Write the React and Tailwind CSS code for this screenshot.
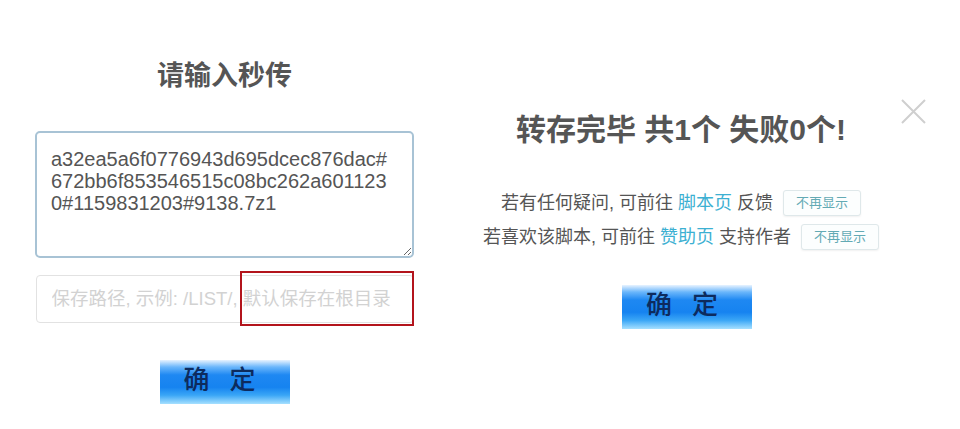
import React from 'react';

const font = "font-['Liberation_Sans','Noto_Sans_CJK_SC',sans-serif]";

const ConfirmButton = () => (
  <button className="flex h-[44px] w-[130px] items-center justify-center gap-[20px] bg-[linear-gradient(to_bottom,#e8f3ff_0%,#6ab6fb_16%,#1e88f2_34%,#1683f0_62%,#3aa6f6_80%,#a6e0ff_100%)] pb-[5px] pr-[10px] text-[26px] font-medium leading-none text-[#0d2b5e]">
    <span>确</span>
    <span>定</span>
  </button>
);

const HideTag = () => (
  <span className="ml-[10px] inline-flex h-[26px] w-[78px] items-center justify-center rounded-[3px] border border-[#dfe8ea] bg-[#fcfefe] text-[13px] text-[#63aab4] shadow-[0_1px_2px_rgba(0,0,0,0.06)]">
    不再显示
  </span>
);

export default function App() {
  const hash = 'a32ea5a6f0776943d695dcec876dac#\n672bb6f853546515c08bc262a601123\n0#1159831203#9138.7z1';

  return (
    <div className={`relative flex h-[429px] w-[960px] bg-white ${font}`}>
      {/* left: input dialog */}
      <div className="flex w-[449px] flex-col items-center pt-[58px]">
        <h2 className="text-[27px] font-bold leading-[36px] text-[#555]">请输入秒传</h2>
        <textarea
          readOnly
          value={hash}
          className={`mt-[37px] h-[127px] w-[379px] rounded-[5px] border-2 border-[#a8c3d5] bg-white px-[14px] pt-[15px] text-[20px] leading-[22px] text-[#555] outline-none ${font}`}
        />
        <div className="relative mt-[17px] h-[48px] w-[378px]">
          <input
            readOnly
            placeholder="保存路径, 示例: /LIST/, 默认保存在根目录"
            className={`h-full w-full rounded-[4px] border border-[#e2e2e2] bg-white px-[15px] text-[18.5px] text-[#555] outline-none placeholder:text-[#d2d2d2] ${font}`}
          />
          <div className="absolute left-[204px] top-[-4px] h-[55px] w-[174px] border-2 border-[#b3141c]" />
        </div>
        <div className="mt-[37px]">
          <ConfirmButton />
        </div>
      </div>

      {/* right: result dialog */}
      <div className="flex w-[464px] flex-col items-center pt-[110px]">
        <h2 className="text-[30px] font-bold leading-[40px] text-[#555]">转存完毕 共1个 失败0个!</h2>
        <div className="mt-[40px] flex items-center text-[18px] leading-[26px] text-[#555]">
          <span>
            若有任何疑问, 可前往 <span className="text-[#3cb0d2]">脚本页</span> 反馈
          </span>
          <HideTag />
        </div>
        <div className="mt-[8px] flex items-center text-[18px] leading-[26px] text-[#555]">
          <span>
            若喜欢该脚本, 可前往 <span className="text-[#3cb0d2]">赞助页</span> 支持作者
          </span>
          <HideTag />
        </div>
        <div className="ml-[12px] mt-[35px]">
          <ConfirmButton />
        </div>
      </div>

      <button className="absolute left-[901px] top-[99px] text-[#cfcfcf]">
        <svg width="25" height="25" viewBox="0 0 25 25" fill="none" stroke="currentColor" strokeWidth="2">
          <path d="M1 1 L24 24 M24 1 L1 24" />
        </svg>
      </button>
    </div>
  );
}
